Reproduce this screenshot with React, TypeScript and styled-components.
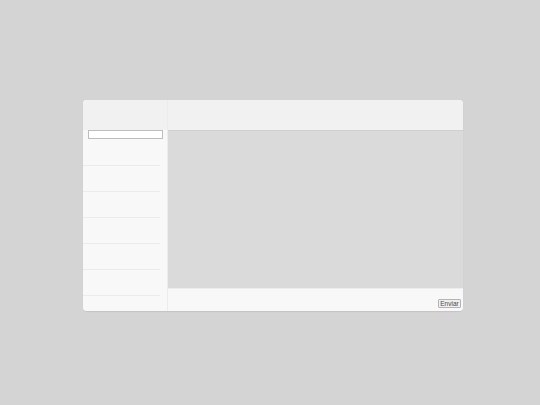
import React from 'react';
import styled, { createGlobalStyle } from 'styled-components';

const Global = createGlobalStyle`
  html, body {
    margin: 0;
    padding: 0;
    background: #d4d4d4;
    font-family: "Liberation Sans", Arial, sans-serif;
  }
`;

const Root = styled.div`
  width: 540px;
  height: 405px;
  box-sizing: border-box;
  padding: 100px 0 0 83px;
  background: #d4d4d4;
`;

const Card = styled.div`
  width: 380px;
  height: 211px;
  display: grid;
  grid-template-columns: 85px 1fr;
  border-radius: 4px;
  overflow: hidden;
  background: #f8f8f8;
  box-shadow: 0 1px 1px rgba(0, 0, 0, 0.08);
`;

const Sidebar = styled.aside`
  display: flex;
  flex-direction: column;
  background: #f8f8f8;
  border-right: 1px solid #ececec;
`;

const SideHeader = styled.div`
  height: 30px;
  flex: none;
  background: #f1f1f1;
`;

const Search = styled.input`
  box-sizing: border-box;
  width: 75px;
  height: 9px;
  margin: 0 0 0 5px;
  padding: 0;
  border: 1px solid #bdbdbd;
  background: #ffffff;
  outline: none;
`;

const List = styled.ul`
  list-style: none;
  margin: 0;
  padding: 1px 7px 0 0;
`;

const Item = styled.li`
  box-sizing: border-box;
  height: 26px;
  border-bottom: 1px solid #ebebeb;
`;

const Main = styled.section`
  display: flex;
  flex-direction: column;
`;

const MainHeader = styled.div`
  height: 30px;
  flex: none;
  background: #f1f1f1;
  border-bottom: 1px solid #cfcfcf;
`;

const Messages = styled.div`
  flex: 1;
  background: #dadada;
`;

const Footer = styled.div`
  height: 23px;
  flex: none;
  display: flex;
  align-items: flex-end;
  justify-content: flex-end;
  box-sizing: border-box;
  padding: 0 2px 3px 0;
  background: #f8f8f8;
  border-top: 1px solid #ededed;
`;

const SendButton = styled.button`
  box-sizing: border-box;
  height: 9px;
  width: 23px;
  padding: 0;
  border: 1px solid #b4b4b4;
  border-radius: 1px;
  background: #efefef;
  color: #4a4a4a;
  font-family: "Liberation Sans", Arial, sans-serif;
  font-size: 6.5px;
  line-height: 7px;
`;

export default function App() {
  return (
    <Root>
      <Global />
      <Card>
        <Sidebar>
          <SideHeader />
          <Search />
          <List>
            {[0, 1, 2, 3, 4, 5].map((i) => (
              <Item key={i} />
            ))}
          </List>
        </Sidebar>
        <Main>
          <MainHeader />
          <Messages />
          <Footer>
            <SendButton>Enviar</SendButton>
          </Footer>
        </Main>
      </Card>
    </Root>
  );
}
